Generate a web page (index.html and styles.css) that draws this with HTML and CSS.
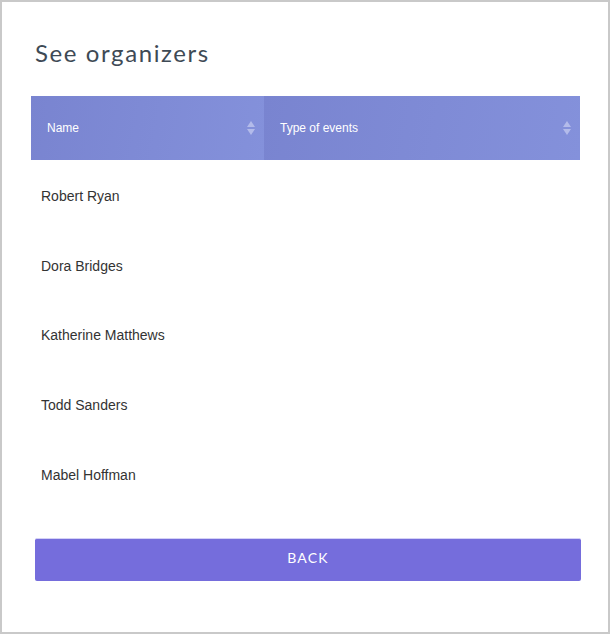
FILE: index.html
```html
<!DOCTYPE html>
<html>
<head>
<meta charset="utf-8">
<link rel="stylesheet" href="styles.css">
</head>
<body>
<div class="card">
  <h1 class="title">See organizers</h1>
  <table class="table">
    <thead>
      <tr>
        <th class="col-name"><div class="th-inner"><span>Name</span><span class="sort"><i class="up"></i><i class="down"></i></span></div></th>
        <th class="col-type"><div class="th-inner"><span>Type of events</span><span class="sort"><i class="up"></i><i class="down"></i></span></div></th>
      </tr>
    </thead>
    <tbody>
      <tr><td>Robert Ryan</td><td></td></tr>
      <tr><td>Dora Bridges</td><td></td></tr>
      <tr><td>Katherine Matthews</td><td></td></tr>
      <tr><td>Todd Sanders</td><td></td></tr>
      <tr><td>Mabel Hoffman</td><td></td></tr>
    </tbody>
  </table>
  <button class="back">BACK</button>
</div>
</body>
</html>
```
FILE: styles.css
```css
html, body {
  margin: 0;
  padding: 0;
  background: #fff;
}
.card {
  box-sizing: border-box;
  width: 610px;
  height: 634px;
  border: 2px solid #c9c9c9;
  padding: 0 0 0 29px;
  display: flex;
  flex-direction: column;
}
.title {
  margin: 35px 0 0 4px;
  height: 59px;
  font-family: Lato, sans-serif;
  font-weight: 400;
  font-size: 24px;
  line-height: 32px;
  letter-spacing: 1.6px;
  color: #3e4a55;
}
.table {
  width: 549px;
  border-collapse: collapse;
  border-spacing: 0;
  font-family: "Liberation Sans", Arial, sans-serif;
}
.table th {
  height: 64px;
  padding: 0 0 0 16px;
  text-align: left;
  font-weight: 400;
  font-size: 12px;
  color: #fff;
  background: linear-gradient(100deg, #7984d0 0%, #8491db 100%);
}
.col-name { width: 233px; box-sizing: border-box; }
.th-inner {
  display: flex;
  align-items: center;
  justify-content: space-between;
  padding-right: 9px;
}
.sort {
  display: flex;
  flex-direction: column;
  gap: 2px;
}
.sort i {
  display: block;
  width: 0;
  height: 0;
  border-left: 4px solid transparent;
  border-right: 4px solid transparent;
}
.sort .up { border-bottom: 6px solid #b3bbea; }
.sort .down { border-top: 6px solid #b3bbea; }
.table tbody tr { height: 69.6px; }
.table tbody tr:first-child { height: 71px; }
.table td {
  padding: 0 0 0 10px;
  font-size: 14px;
  color: #333;
}
.back {
  margin: 29px 0 0 4px;
  width: 546px;
  height: 43px;
  border: none;
  border-top: 1px solid #d4d1f6;
  border-radius: 2px;
  background: #756ddc;
  color: #fff;
  font-family: Lato, sans-serif;
  font-size: 14px;
  line-height: 16px;
  letter-spacing: 1.2px;
  padding: 0 0 4px 0;
}
```
